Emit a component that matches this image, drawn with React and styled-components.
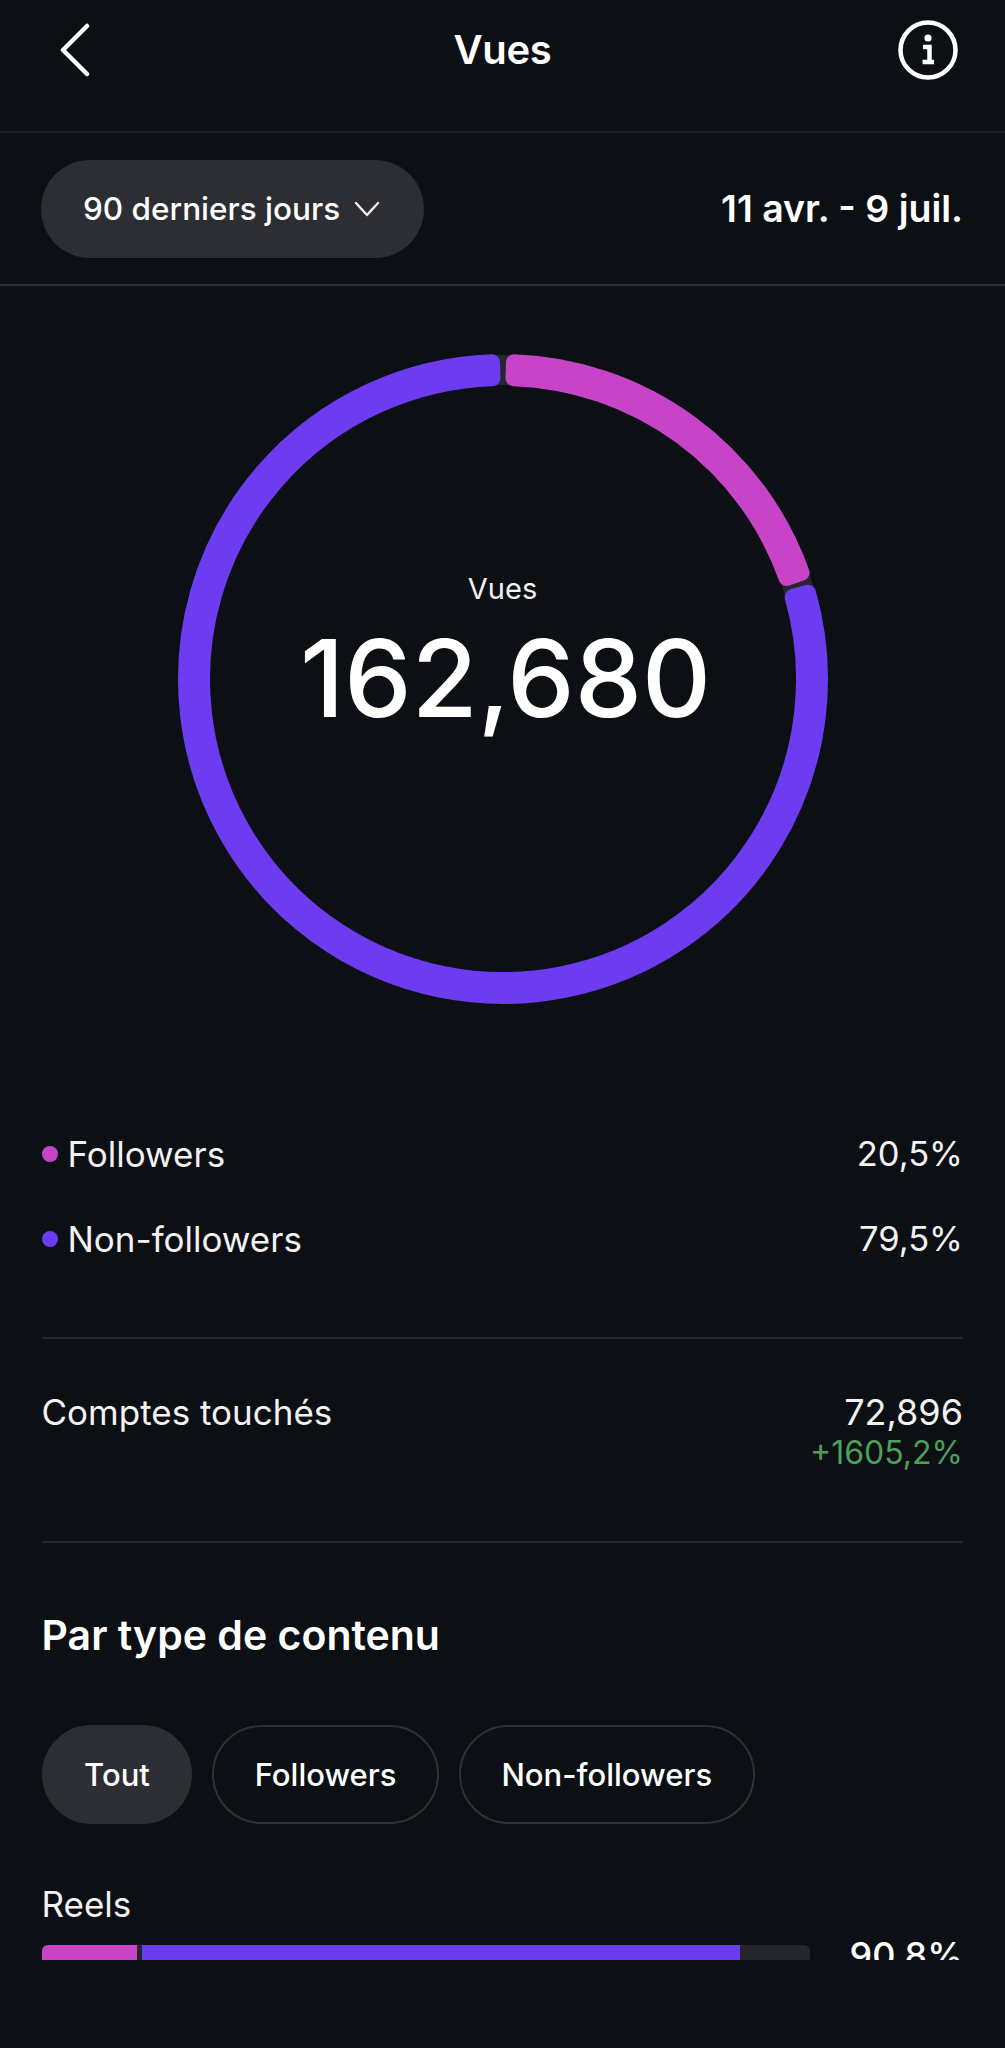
import React from "react";
import styled, { createGlobalStyle } from "styled-components";

const PINK = "#c744c9";
const PURPLE = "#6d3bf0";

const GlobalStyle = createGlobalStyle`
  html, body {
    margin: 0;
    background: #0c0f14;
  }
  body {
    font-family: Inter, "Noto Sans", sans-serif;
    color: #fff;
  }
`;

const Screen = styled.div`
  width: 1005px;
  height: 2048px;
  background: #0c0f14;
`;

const Scroll = styled.div`
  height: 1960px;
  overflow: hidden;
`;

const Header = styled.header`
  height: 99px;
  display: grid;
  grid-template-columns: 1fr auto 1fr;
  align-items: center;
  padding: 0 47px 32px 58px;
  border-bottom: 2px solid #1c1e23;
`;

const HeaderSide = styled.div`
  display: flex;
  justify-content: ${({ $end }) => ($end ? "flex-end" : "flex-start")};
`;

const Title = styled.h1`
  margin: 0 0 0 -11px;
  font-size: 40px;
  font-weight: 600;
  letter-spacing: -0.3px;
`;

const FilterBar = styled.div`
  height: 151px;
  display: flex;
  align-items: center;
  justify-content: space-between;
  padding: 0 42px 0 41px;
  border-bottom: 2px solid #2a2c31;
`;

const Select = styled.div`
  width: 383px;
  height: 98px;
  box-sizing: border-box;
  padding-left: 42px;
  display: flex;
  align-items: center;
  gap: 14px;
  border-radius: 49px;
  background: #2c2e33;
  font-size: 31.5px;
  font-weight: 500;
`;

const DateRange = styled.div`
  font-size: 37.5px;
  font-weight: 600;
`;

const RingWrap = styled.div`
  position: relative;
  width: 652px;
  height: 652px;
  margin: 67px auto 0;
`;

const RingCenter = styled.div`
  position: absolute;
  inset: 0 0 50px;
  display: flex;
  flex-direction: column;
  align-items: center;
  justify-content: center;
  gap: 11px;
`;

const RingLabel = styled.div`
  font-size: 29px;
  line-height: 36px;
  color: #f2f2f2;
`;

const RingValue = styled.div`
  padding-left: 6px;
  font-size: 107px;
  line-height: 120px;
  font-weight: 500;
`;

const Content = styled.div`
  padding: 0 42px 0 41.5px;
`;

const Legend = styled.div`
  margin-top: 127px;
  padding-bottom: 76px;
  display: flex;
  flex-direction: column;
  gap: 41px;
  border-bottom: 2px solid #26282d;
`;

const Row = styled.div`
  display: flex;
  justify-content: space-between;
  font-size: 35px;
  line-height: 44px;
  color: #f2f2f2;
`;

const RowValue = styled.span`
  font-size: ${({ $size }) => $size || "34.5px"};
`;

const LegendLabel = styled.div`
  display: flex;
  align-items: center;
  gap: 10px;
`;

const Dot = styled.span`
  width: 16px;
  height: 16px;
  border-radius: 50%;
  background: ${({ $color }) => $color};
`;

const Reach = styled.div`
  padding: 51px 0 69px;
  border-bottom: 2px solid #26282d;
`;

const Delta = styled.div`
  text-align: right;
  font-size: 32px;
  line-height: 38px;
  color: #4f9f5b;
`;

const SectionTitle = styled.h2`
  margin: 69px 0 0;
  font-size: 41px;
  line-height: 46px;
  font-weight: 600;
`;

const Chips = styled.div`
  margin-top: 67px;
  display: flex;
  gap: 19.7px;
`;

const Chip = styled.div`
  height: 99px;
  box-sizing: border-box;
  padding: 0 40.6px;
  display: flex;
  align-items: center;
  border-radius: 50px;
  font-size: 31px;
  font-weight: 500;
  background: ${({ $active }) => ($active ? "#2c2e33" : "transparent")};
  border: 2px solid ${({ $active }) => ($active ? "#2c2e33" : "#2f3136")};
`;

const BarLabel = styled.div`
  margin-top: 58px;
  font-size: 35px;
  line-height: 44px;
  color: #f2f2f2;
`;

const BarRow = styled.div`
  margin-top: 19px;
  display: flex;
  align-items: flex-start;
  justify-content: space-between;
`;

const Track = styled.div`
  width: 768px;
  height: 24px;
  display: flex;
  gap: 5px;
  border-radius: 6px;
  overflow: hidden;
  background: #24262b;
`;

const Fill = styled.div`
  height: 100%;
  background: ${({ $color }) => $color};
`;

const BarValue = styled.div`
  margin-top: -2px;
  font-size: 36px;
  line-height: 24px;
  font-weight: 500;
`;

// annular sector, the round join of the stroke gives the soft corners
function sector(from, to) {
  const c = 326;
  const point = (r, a) => {
    const rad = (a * Math.PI) / 180;
    return `${(c + r * Math.sin(rad)).toFixed(2)} ${(c - r * Math.cos(rad)).toFixed(2)}`;
  };
  const large = to - from > 180 ? 1 : 0;
  return `M${point(317, from)} A317 317 0 ${large} 1 ${point(317, to)} L${point(301, to)} A301 301 0 ${large} 0 ${point(301, from)} Z`;
}

function Ring() {
  return (
    <svg width="652" height="652" viewBox="0 0 652 652">
      <circle cx="326" cy="326" r="309" fill="none" stroke="#26272c" strokeWidth="30" />
      <path d={sector(2, 70.4)} fill={PINK} stroke={PINK} strokeWidth="16" strokeLinejoin="round" />
      <path d={sector(74.2, 358)} fill={PURPLE} stroke={PURPLE} strokeWidth="16" strokeLinejoin="round" />
    </svg>
  );
}

function BackIcon() {
  return (
    <svg width="34" height="54" viewBox="0 0 34 54" fill="none" stroke="#fff" strokeWidth="4.5" strokeLinecap="round" strokeLinejoin="round">
      <path d="M29 3 L5 27 L29 51" />
    </svg>
  );
}

function InfoIcon() {
  return (
    <svg width="60" height="60" viewBox="0 0 60 60" fill="none">
      <circle cx="30" cy="30" r="27.5" stroke="#fff" strokeWidth="4.5" />
      <circle cx="30" cy="18" r="3.6" fill="#fff" />
      <path d="M25 27 H31.5 V41 M24.5 42 H36" stroke="#fff" strokeWidth="4.5" />
    </svg>
  );
}

function Chevron() {
  return (
    <svg width="26" height="16" viewBox="0 0 26 16" fill="none" stroke="#f2f2f2" strokeWidth="2.4" strokeLinecap="round" strokeLinejoin="round">
      <path d="M2 2 L13 14 L24 2" />
    </svg>
  );
}

export default function App() {
  return (
    <>
      <GlobalStyle />
      <Screen>
        <Scroll>
          <Header>
            <HeaderSide><BackIcon /></HeaderSide>
            <Title>Vues</Title>
            <HeaderSide $end><InfoIcon /></HeaderSide>
          </Header>
          <FilterBar>
            <Select>
              90 derniers jours
              <Chevron />
            </Select>
            <DateRange>11 avr. - 9 juil.</DateRange>
          </FilterBar>
          <RingWrap>
            <Ring />
            <RingCenter>
              <RingLabel>Vues</RingLabel>
              <RingValue>162,680</RingValue>
            </RingCenter>
          </RingWrap>
          <Content>
            <Legend>
              <Row>
                <LegendLabel><Dot $color={PINK} />Followers</LegendLabel>
                <RowValue>20,5%</RowValue>
              </Row>
              <Row>
                <LegendLabel><Dot $color={PURPLE} />Non-followers</LegendLabel>
                <RowValue>79,5%</RowValue>
              </Row>
            </Legend>
            <Reach>
              <Row>
                <span>Comptes touchés</span>
                <RowValue $size="36px">72,896</RowValue>
              </Row>
              <Delta>+1605,2%</Delta>
            </Reach>
            <SectionTitle>Par type de contenu</SectionTitle>
            <Chips>
              <Chip $active>Tout</Chip>
              <Chip>Followers</Chip>
              <Chip>Non-followers</Chip>
            </Chips>
            <BarLabel>Reels</BarLabel>
            <BarRow>
              <Track>
                <Fill $color={PINK} style={{ width: "95px" }} />
                <Fill $color={PURPLE} style={{ width: "598px" }} />
              </Track>
              <BarValue>90,8%</BarValue>
            </BarRow>
          </Content>
        </Scroll>
      </Screen>
    </>
  );
}
